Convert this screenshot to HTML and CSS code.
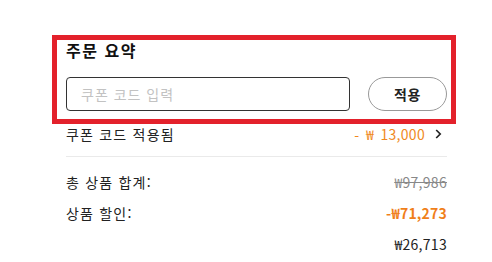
FILE: index.html
```html
<!DOCTYPE html>
<html lang="ko">
<head>
<meta charset="utf-8">
<link rel="stylesheet" href="styles.css">
</head>
<body>
<div class="summary">
  <section class="highlight">
    <h2 class="title">주문 요약</h2>
    <div class="coupon-form">
      <input class="coupon-input" type="text" placeholder="쿠폰 코드 입력">
      <button class="apply-btn" type="button">적용</button>
    </div>
  </section>
  <div class="coupon-row">
    <span class="label">쿠폰 코드 적용됨</span>
    <span class="coupon-value">- ₩ 13,000
      <svg class="chev" width="7" height="10" viewBox="0 0 7 10"><path d="M1.2 1 L5.2 5 L1.2 9" fill="none" stroke="#222" stroke-width="1.7"/></svg>
    </span>
  </div>
  <div class="line-item">
    <span class="label">총 상품 합계:</span>
    <span class="strike">₩97,986</span>
  </div>
  <div class="line-item">
    <span class="label">상품 할인:</span>
    <span class="discount">-₩71,273</span>
  </div>
  <div class="line-item">
    <span class="label"></span>
    <span class="total">₩26,713</span>
  </div>
</div>
</body>
</html>
```
FILE: styles.css
```css
html, body {
  margin: 0;
  padding: 0;
  background: #fff;
}
body {
  font-family: "Noto Sans CJK KR", "Noto Sans", sans-serif;
  color: #222;
  font-size: 14px;
}
.summary {
  width: 381px;
  margin-left: 66px;
  padding-top: 35px;
}
.highlight {
  margin: 0 -9px 0 -14px;
  border: 5px solid #e3212b;
  padding: 0 4px 8px 9px;
}
.title {
  margin: 0;
  font-size: 16px;
  font-weight: 700;
  line-height: 20px;
  letter-spacing: 1.5px;
  color: #111;
}
.coupon-form {
  display: flex;
  gap: 18px;
  margin-top: 17px;
}
.coupon-input {
  flex: 1;
  height: 34px;
  box-sizing: border-box;
  border: 1px solid #333;
  border-radius: 4px;
  padding: 0 14px;
  font-family: inherit;
  font-size: 14px;
  letter-spacing: 1px;
  outline: none;
}
.coupon-input::placeholder {
  color: #c2c2c2;
}
.apply-btn {
  width: 79px;
  height: 34px;
  box-sizing: border-box;
  border: 1px solid #999;
  border-radius: 17px;
  background: #fff;
  font-family: inherit;
  font-size: 14px;
  font-weight: 700;
  letter-spacing: 0.5px;
  color: #222;
  padding: 0;
}
.coupon-row {
  display: flex;
  justify-content: space-between;
  align-items: center;
  height: 20px;
  padding-bottom: 12px;
  border-bottom: 1px solid #eaeaea;
  margin-bottom: 9px;
  line-height: 20px;
}
.label {
  letter-spacing: 1.2px;
}
.coupon-value {
  display: flex;
  align-items: center;
  gap: 10px;
  color: #f0891d;
  padding-right: 5px;
  word-spacing: 3px;
  letter-spacing: 0.3px;
}
.chev {
  display: block;
}
.line-item {
  display: flex;
  justify-content: space-between;
  align-items: center;
  height: 31px;
  line-height: 20px;
}
.strike {
  color: #888;
  text-decoration: line-through;
  letter-spacing: 0.3px;
}
.discount {
  color: #f07f1a;
  font-weight: 700;
  letter-spacing: 0.2px;
}
.total {
  color: #222;
  letter-spacing: 0.3px;
}
```
